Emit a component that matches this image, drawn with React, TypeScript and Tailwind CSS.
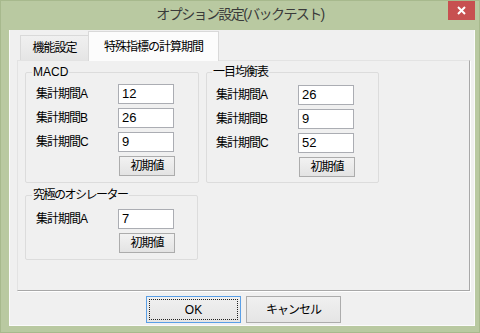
import React from "react";

function Field({ label, value }: { label: string; value: string }) {
  return (
    <div className="flex items-center h-[20px]">
      <span className="w-[82px] text-[12px] leading-[14px] tracking-[-1px] text-black">{label}</span>
      <div className="w-[56px] h-[20px] border border-[#abadb3] bg-white pl-[3px] text-[13px] leading-[18px] text-black font-['Liberation_Sans',sans-serif]">
        {value}
      </div>
    </div>
  );
}

function ResetButton() {
  return (
    <div className="flex h-[20px]">
      <div className="w-[83px]" />
      <div className="w-[56px] h-[20px] border border-[#acacac] bg-gradient-to-b from-[#f2f2f2] to-[#e3e3e3] flex items-center justify-center text-[12px] tracking-[-1px] text-black">
        初期値
      </div>
    </div>
  );
}

export default function App() {
  return (
    <div className="w-[480px] h-[333px] bg-[#b9c9a1] border border-[#a7b98d] flex flex-col font-['Liberation_Sans','Noto_Sans_CJK_JP',sans-serif] overflow-hidden">
      {/* title bar */}
      <div className="relative h-[29px] flex items-start justify-center">
        <span className="mt-[5px] text-[14px] leading-[17px] tracking-[-1.6px] text-[#3a3a3a]">オプション設定(バックテスト)</span>
        <div className="absolute right-[4px] top-[-1px] w-[27px] h-[20px] bg-[#c75050] flex items-center justify-center">
          <svg width="9" height="9" viewBox="0 0 9 9">
            <path d="M1 1 L8 8 M8 1 L1 8" stroke="white" strokeWidth="2" />
          </svg>
        </div>
      </div>
      {/* client */}
      <div className="ml-[8px] w-[466px] h-[296px] bg-[#f0f0f0] border-l border-r border-b border-[#fbfbfb] flex flex-col pl-[7px]">
        {/* tabs */}
        <div className="h-[30px] flex items-end pl-[3px]">
          <div className="h-[25px] w-[69px] border border-b-0 border-[#d9d9d9] bg-gradient-to-b from-[#f0f0f0] to-[#e5e5e5] flex items-center justify-center text-[12px] tracking-[-1px] text-black">
            機能設定
          </div>
          <div className="relative z-10 -ml-px -mb-px h-[30px] w-[131px] border border-b-0 border-[#d9d9d9] bg-[#fcfcfc] flex items-start justify-center pt-[6px] text-[12px] tracking-[-1px] text-black">
            特殊指標の計算期間
          </div>
        </div>
        {/* panel */}
        <div className="w-[453px] h-[231px] border-t border-l border-[#e3e3e3] border-r border-b border-r-[#a8a8a8] border-b-[#a8a8a8] shadow-[1px_1px_0_#ffffff] bg-[#f0f0f0] flex gap-[7px] pl-[7px] pt-[4px]">
          <div className="flex flex-col gap-[5px]">
            <fieldset className="w-[174px] border border-[#dcdcdc] rounded-[2px] pl-[10px] pb-[6px]">
              <legend className="-ml-[4px] px-[1px] text-[12px] leading-[14px] text-black">MACD</legend>
              <div className="flex flex-col gap-[4px] pt-[5px]">
                <Field label="集計期間A" value="12" />
                <Field label="集計期間B" value="26" />
                <Field label="集計期間C" value="9" />
                <ResetButton />
              </div>
            </fieldset>
            <fieldset className="w-[173px] border border-[#dcdcdc] rounded-[2px] pl-[10px] pb-[6px]">
              <legend className="-ml-[4px] px-[1px] text-[12px] leading-[14px] tracking-[-1.5px] text-black">究極のオシレーター</legend>
              <div className="flex flex-col gap-[4px] pt-[7px]">
                <Field label="集計期間A" value="7" />
                <ResetButton />
              </div>
            </fieldset>
          </div>
          <div className="flex flex-col">
            <fieldset className="w-[173px] border border-[#dcdcdc] rounded-[2px] pl-[9px] pb-[5px]">
              <legend className="-ml-[4px] px-[1px] text-[12px] leading-[14px] tracking-[-1px] text-black">一目均衡表</legend>
              <div className="flex flex-col gap-[4px] pt-[6px]">
                <Field label="集計期間A" value="26" />
                <Field label="集計期間B" value="9" />
                <Field label="集計期間C" value="52" />
                <ResetButton />
              </div>
            </fieldset>
          </div>
        </div>
        {/* buttons */}
        <div className="mt-[5px] flex justify-center gap-[5px] pr-[4px]">
          <div className="w-[95px] h-[27px] border border-[#5a9fe6] bg-gradient-to-b from-[#f0f0f0] to-[#e5e5e5] flex p-[2px]">
            <div className="flex-1 border border-dotted border-[#222] flex items-center justify-center text-[12px] text-black">OK</div>
          </div>
          <div className="w-[95px] h-[27px] border border-[#acacac] bg-gradient-to-b from-[#f0f0f0] to-[#e5e5e5] flex items-center justify-center text-[12px] tracking-[-1px] text-black">
            キャンセル
          </div>
        </div>
      </div>
    </div>
  );
}
